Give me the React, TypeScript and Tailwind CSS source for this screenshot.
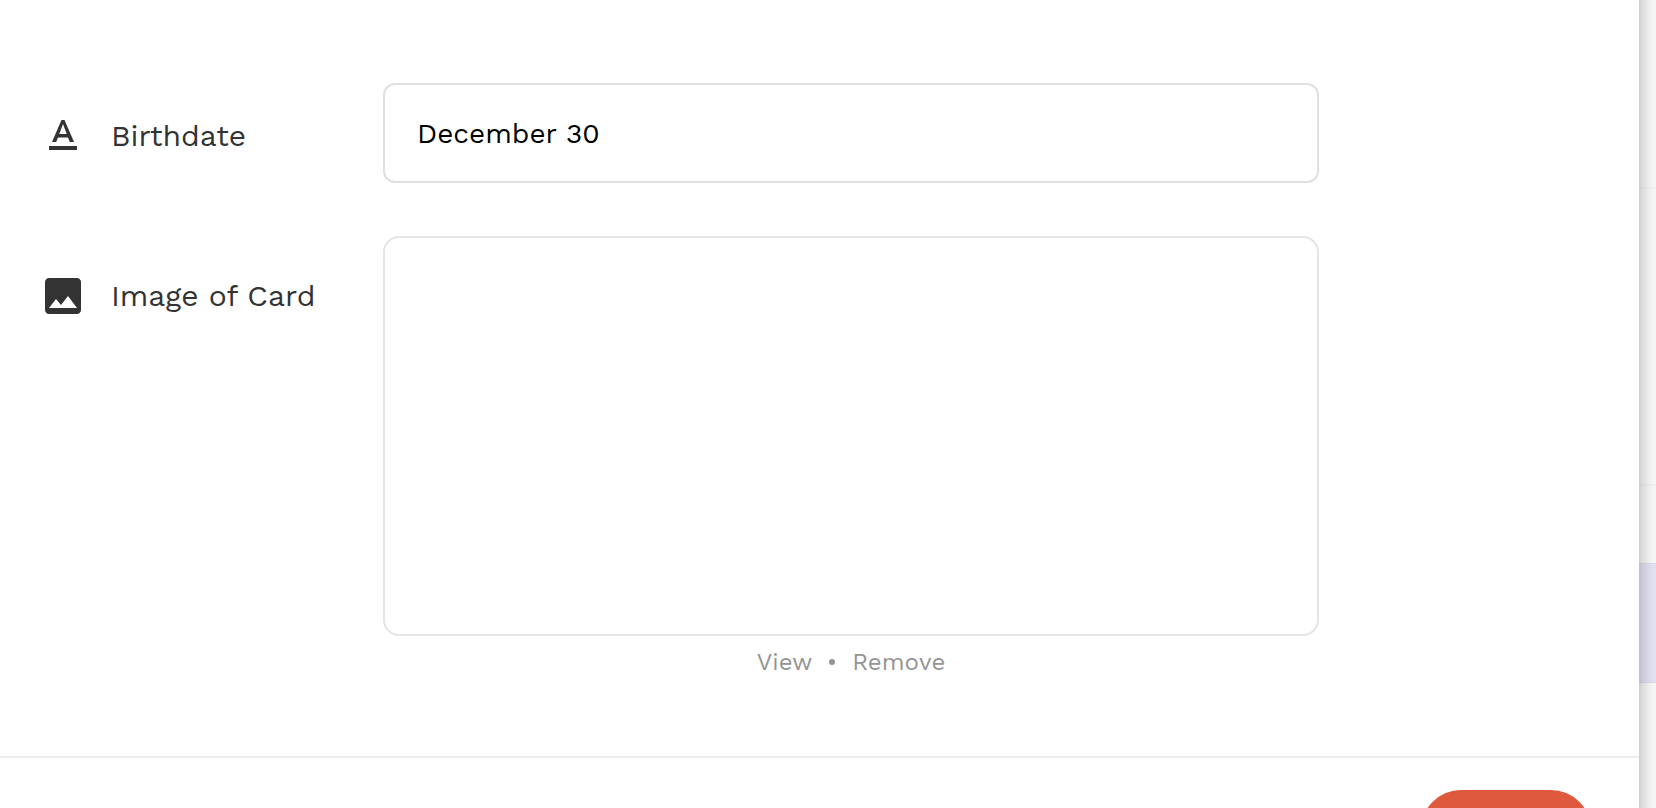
import { MdImage, MdTextFormat } from "react-icons/md";

function BackgroundList() {
  return (
    <div aria-hidden="true" className="flex w-[17px] shrink-0 flex-col bg-[#fbfbfb]">
      <div className="h-[189px] border-b-2 border-[#f6f6f6]" />
      <div className="h-[297px] border-b-2 border-[#f6f6f6]" />
      <div className="h-[77px]" />
      <div className="h-[120px] border-y border-[#e0e0ec] bg-[#e6e6f7]" />
    </div>
  );
}

export default function App() {
  return (
    <div className="flex h-screen overflow-hidden bg-white font-['Work_Sans','Noto_Sans',sans-serif]">
      <main className="z-10 -my-8 flex min-w-0 flex-1 flex-col bg-white py-8 shadow-[0_0_20px_rgba(0,0,0,0.34)]">
        <form className="flex flex-col" onSubmit={(e) => e.preventDefault()}>
          <div className="flex flex-col gap-[53px] pt-[83px] pr-80 pb-[78px] pl-[39px]">
            <div className="flex items-start">
              <label
                htmlFor="birthdate"
                className="flex w-[344px] shrink-0 items-center gap-6 pt-[29px] text-[30px] leading-[48px] text-[#333333]"
              >
                <MdTextFormat className="size-12 shrink-0" />
                Birthdate
              </label>
              <input
                id="birthdate"
                type="text"
                defaultValue="December 30"
                className="h-[100px] min-w-0 flex-1 rounded-xl border-2 border-[#e0e0e0] bg-white px-8 text-[28px] text-black outline-none"
              />
            </div>
            <div className="flex items-start">
              <div
                id="card-image"
                className="flex w-[344px] shrink-0 items-center gap-6 pt-9 text-[30px] leading-[48px] text-[#333333]"
              >
                <MdImage className="size-12 shrink-0" />
                Image of Card
              </div>
              <div className="min-w-0 flex-1">
                <div
                  role="img"
                  aria-labelledby="card-image"
                  className="h-[400px] rounded-2xl border-2 border-[#e4e4e4]"
                />
                <div className="flex items-center justify-center gap-[17px] pt-[10px] text-2xl leading-8 text-[#949494]">
                  <button type="button">View</button>
                  <span aria-hidden="true" className="size-1.5 rounded-full bg-[#949494]" />
                  <button type="button">Remove</button>
                </div>
              </div>
            </div>
          </div>
          <div className="flex justify-end border-t-2 border-[#ededed] px-12 py-8">
            <button
              type="submit"
              aria-label="Save"
              className="h-20 w-[170px] rounded-full bg-[#de593d]"
            />
          </div>
        </form>
      </main>
      <BackgroundList />
    </div>
  );
}
